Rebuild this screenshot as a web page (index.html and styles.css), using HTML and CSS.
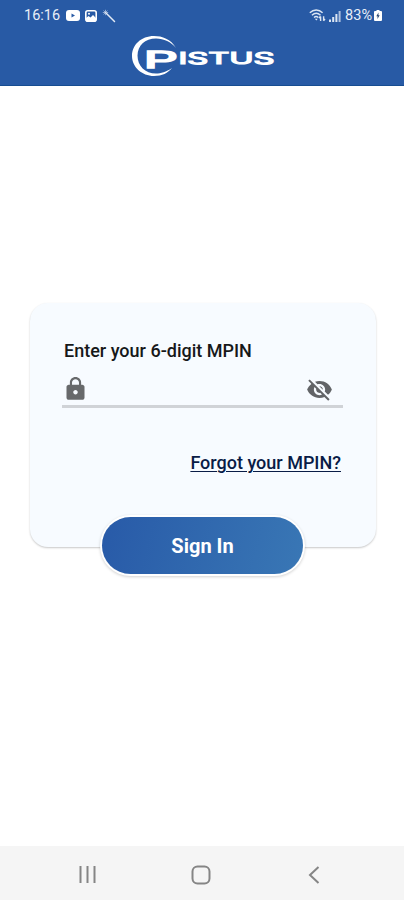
FILE: index.html
```html
<!DOCTYPE html>
<html lang="en">
<head>
  <meta charset="UTF-8">
  <meta name="viewport" content="width=device-width, initial-scale=1.0">
  <title>Pistus - Sign In</title>
  <link rel="stylesheet" href="styles.css">
</head>
<body>
  <header>
    <div class="status-bar">
      <div class="status-left">
        <span class="clock">16:16</span>
        <svg class="icon-video" width="14" height="11" viewBox="0 0 14 11">
          <rect width="14" height="11" rx="3" fill="#fff"/>
          <path d="M5.5 3.4v4.2L9 5.5z" fill="#285aa5"/>
        </svg>
        <svg class="icon-image" width="12" height="12" viewBox="0 0 12 12">
          <rect x="0.8" y="0.8" width="10.4" height="10.4" rx="2" fill="#285aa5" stroke="#fff" stroke-width="1.6"/>
          <path d="M1 8l2.5-2 2 1.5L8 5l3 3v3H1z" fill="#fff"/>
          <circle cx="4" cy="3.7" r="1" fill="#fff"/>
        </svg>
        <svg class="icon-wand" width="14" height="14" viewBox="0 0 14 14" fill="none" stroke="#e3eaf5">
          <path d="M4.5 4.5l8 8" stroke-width="1.5" stroke-linecap="round"/>
          <path d="M3.5.8v5.4M.8 3.5h5.4M1.6 1.6l3.8 3.8M5.4 1.6L1.6 5.4" stroke-width=".6"/>
        </svg>
      </div>
      <div class="status-right">
        <svg class="icon-wifi" width="17" height="13" viewBox="0 0 17 13" fill="none" stroke="#dce6f3" stroke-width="1.4">
          <path d="M.8 3.8c3.8-3.7 9-3.7 12.8 0M2.9 6.2c2.7-2.4 6-2.4 8.6 0M5 8.5c1.3-1.1 3-1.1 4.3 0"/>
          <path d="M5.8 9.7l1.6 1.8 1.4-1.8z" fill="#dce6f3" stroke="none"/>
          <path d="M11.6 12V7.5M10 9l1.6-1.8M14.6 7.2v4.5M16 10l-1.5 1.8"/>
        </svg>
        <svg class="icon-signal" width="12" height="12" viewBox="0 0 12 12" fill="#dce6f3">
          <path d="M0 9.5h2V12H0zM3.2 7h2v5h-2zM6.4 4h2v8h-2z"/>
          <path d="M9.6 1h2v11h-2z" opacity=".75"/>
        </svg>
        <span class="battery-text">83%</span>
        <svg class="icon-battery" width="8" height="11" viewBox="0 0 8 11">
          <path d="M2.5 0h3v1H7q1 0 1 1v8q0 1-1 1H1q-1 0-1-1V2q0-1 1-1h1.5z" fill="#fff"/>
          <path d="M4.500 2.500L2.300 6.200h1.300l-.2 2.800 2.300-3.800H4.400z" fill="#26436f"/>
        </svg>
      </div>
    </div>
    <svg class="logo" width="144" height="42" viewBox="0 0 144 42" fill="#fff">
      <path d="M45 13C40 4 31 1 23 1C10 1 1 10 1 21C1 32 11 41 23 41C31 41 37 38 41 33C35 37 30 38.500 25 38.500C14 38.500 6.500 31 6.500 20.500C6.500 10.500 14 3.500 25 3.500C33 3.500 40 7 45 13Z"/>
      <text class="logo-initial" x="12.500" y="32.500" textLength="34.500" lengthAdjust="spacingAndGlyphs">P</text>
      <text class="logo-text" x="47.500" y="28.500" textLength="96" lengthAdjust="spacingAndGlyphs">ISTUS</text>
    </svg>
  </header>

  <main>
    <form class="card">
      <label for="mpin">Enter your 6-digit MPIN</label>
      <div class="pin-field">
        <svg class="icon-lock" width="27" height="26" viewBox="0 0 24 24" preserveAspectRatio="none" fill="#67696b">
          <path d="M18 8h-1V6c0-2.760-2.240-5-5-5S7 3.240 7 6v2H6c-1.100 0-2 .9-2 2v10c0 1.100.9 2 2 2h12c1.100 0 2-.9 2-2V10c0-1.100-.9-2-2-2zm-6 9c-1.100 0-2-.9-2-2s.9-2 2-2 2 .9 2 2-.9 2-2 2zm3.100-9H8.900V6c0-1.710 1.390-3.100 3.100-3.100s3.100 1.390 3.100 3.100v2z"/>
        </svg>
        <input type="password" id="mpin" maxlength="6" inputmode="numeric">
        <svg class="icon-eye" width="27" height="27" viewBox="0 0 24 24" fill="#626467">
          <path d="M12 7c2.760 0 5 2.240 5 5 0 .65-.13 1.260-.36 1.830l2.920 2.920c1.510-1.260 2.700-2.890 3.430-4.750-1.730-4.390-6-7.500-11-7.500-1.400 0-2.740.25-3.980.7l2.160 2.160C10.740 7.130 11.350 7 12 7zM2 4.270l2.280 2.280.46.46C3.080 8.300 1.780 10.020 1 12c1.730 4.390 6 7.500 11 7.500 1.550 0 3.030-.3 4.380-.84l.42.42L19.730 22 21 20.730 3.270 3 2 4.270zM7.530 9.800l1.550 1.550c-.05.21-.08.43-.08.65 0 1.660 1.340 3 3 3 .22 0 .44-.03.65-.08l1.550 1.550c-.67.33-1.410.53-2.200.53-2.760 0-5-2.240-5-5 0-.79.2-1.530.53-2.200zm4.310-.78l3.150 3.150.02-.16c0-1.660-1.340-3-3-3l-.17.01z"/>
        </svg>
      </div>
      <a href="#" class="forgot-link">Forgot your MPIN?</a>
      <button type="button" class="sign-in-button">Sign In</button>
    </form>
  </main>

  <nav>
    <svg width="18" height="18" viewBox="0 0 18 18" stroke="#858585" stroke-width="2">
      <path d="M1.500 0v17M8.500 0v17M15.500 0v17"/>
    </svg>
    <svg class="icon-home" width="20" height="20" viewBox="0 0 20 20" fill="none" stroke="#858585" stroke-width="2">
      <rect x="1.500" y="1.500" width="17" height="17" rx="5"/>
    </svg>
    <svg width="12" height="18" viewBox="0 0 12 18" fill="none" stroke="#858585" stroke-width="2">
      <path d="M10.500 1L2 9l8.500 8"/>
    </svg>
  </nav>
</body>
</html>
```

FILE: styles.css
```css
* {
  box-sizing: border-box;
}

body {
  font-family: Roboto, Arial, sans-serif;
  margin: 0;
  height: 900px;
  display: flex;
  flex-direction: column;
  background-color: #fff;
}

header {
  height: 86px;
  background-color: #285aa5;
  border-bottom: 1px solid #174d91;
  color: #fff;
  display: flex;
  flex-direction: column;
}

.status-bar {
  height: 31px;
  padding: 0 22px 0 24px;
  display: flex;
  justify-content: space-between;
  align-items: center;
  font-size: 14.5px;
  color: #e9eff8;
}

.status-left,
.status-right {
  display: flex;
  align-items: center;
}

.clock {
  width: 38px;
  margin-right: 4px;
  white-space: nowrap;
}

.icon-image {
  margin: 0 5px 0 5px;
}

.icon-signal {
  margin: 0 4px 0 3px;
}

.battery-text {
  margin-right: 2px;
}

.logo {
  margin: 4px 0 0 131px;
}

.logo-initial,
.logo-text {
  font-family: Inter, sans-serif;
  font-weight: 400;
  stroke: #fff;
  stroke-width: 1.1px;
}

.logo-initial {
  font-size: 23px;
  stroke-width: 1.3px;
}

.logo-text {
  font-size: 16px;
}

main {
  flex: 1;
  padding: 217px 28px 0 30px;
}

.card {
  height: 244px;
  padding: 37px 33px 0 32px;
  display: flex;
  flex-direction: column;
  background-color: #f7fbff;
  border-radius: 18px;
  box-shadow: 0 1px 2px rgba(0, 0, 0, 0.22);
}

.card label {
  margin-left: 2px;
  font-size: 18px;
  line-height: 22px;
  font-weight: 500;
  color: #161819;
}

.pin-field {
  height: 46px;
  flex-shrink: 0;
  padding-bottom: 6px;
  display: flex;
  align-items: flex-end;
  border-bottom: 3px solid #d0d3d7;
}

.pin-field input {
  flex: 1;
  min-width: 0;
  border: none;
  outline: none;
  background: none;
  font-size: 18px;
}

.icon-lock {
  margin-bottom: -3px;
}

.icon-eye {
  margin-right: 10px;
  margin-bottom: -4px;
}

.forgot-link {
  align-self: flex-end;
  margin: 43px 2px 0 0;
  font-size: 18px;
  line-height: 24px;
  font-weight: 500;
  color: #091c46;
  text-decoration-thickness: 1px;
  text-underline-offset: 2px;
}

.sign-in-button {
  width: 201px;
  height: 57px;
  flex-shrink: 0;
  margin: 42px 0 0 40px;
  border: none;
  border-radius: 29px;
  background: linear-gradient(105deg, #285aa8, #3977b5);
  box-shadow: 0 0 0 2px #fff, 0 1px 3px 2px rgba(0, 0, 0, 0.18);
  color: #fff;
  font-family: inherit;
  font-size: 20px;
  font-weight: bold;
}

nav {
  height: 54px;
  padding: 3px 84px 0 79px;
  display: flex;
  justify-content: space-between;
  align-items: center;
  background-color: #f5f5f5;
}

.icon-home {
  margin-right: 4px;
}
```
